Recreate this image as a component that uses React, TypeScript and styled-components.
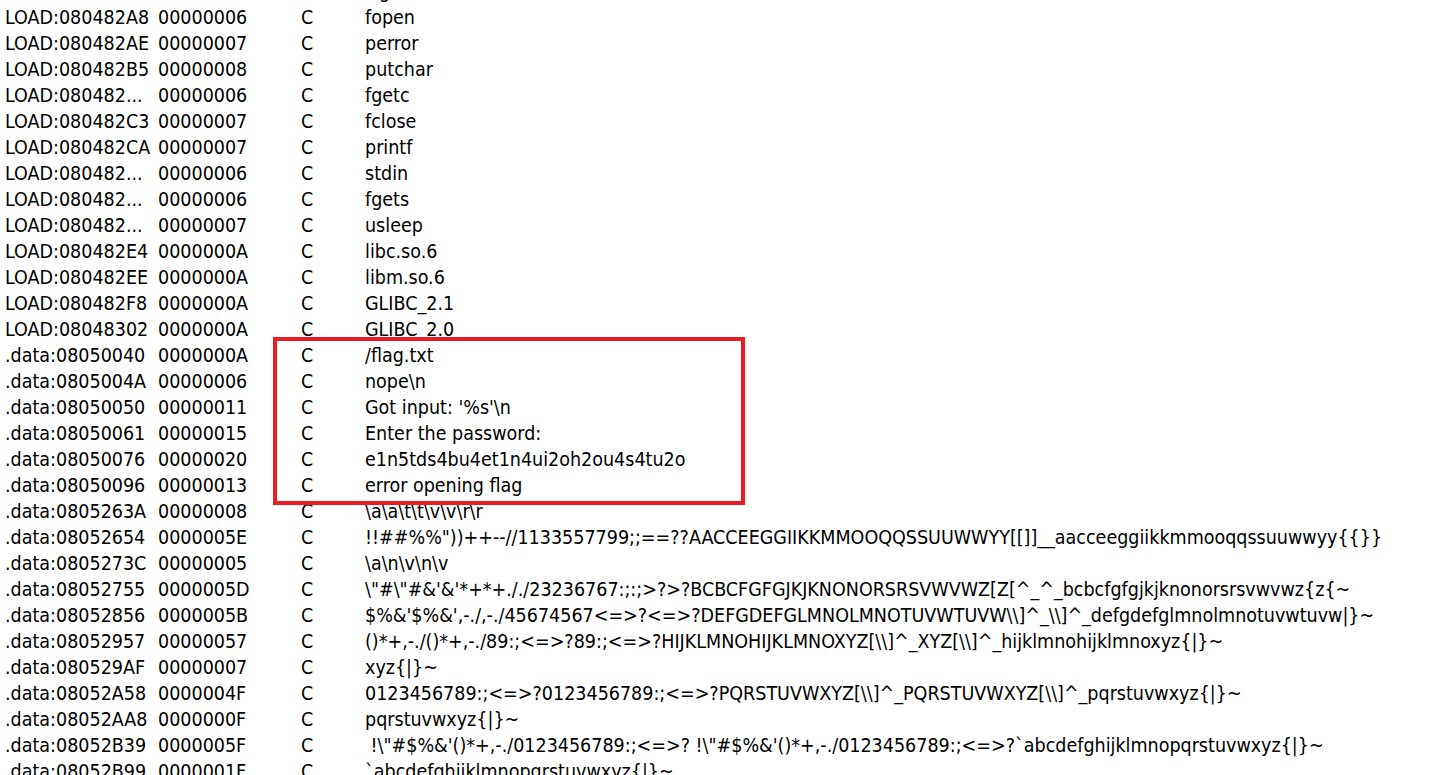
import styled, { createGlobalStyle } from "styled-components";

const GlobalStyle = createGlobalStyle`
  html, body {
    margin: 0;
    padding: 0;
    background: #ffffff;
    overflow: hidden;
  }
`;

const Window = styled.div`
  position: relative;
  width: 1429px;
  height: 775px;
  overflow: hidden;
  background: #ffffff;
`;

const List = styled.div`
  display: flex;
  flex-direction: column;
  margin-top: -21px;
`;

const Row = styled.div`
  display: grid;
  grid-template-columns: 153px 143px 64px 1fr;
  height: 26px;
  line-height: 26px;
  padding-left: 5px;
  font-family: "DejaVu Sans Condensed", "DejaVu Sans", sans-serif;
  font-size: 19.5px;
  color: #000000;
  white-space: pre;
`;

const Cell = styled.span`
  overflow: hidden;
`;

const Highlight = styled.div`
  position: absolute;
  left: 273px;
  top: 337px;
  width: 464px;
  height: 160px;
  border: 4px solid #ed1c24;
  pointer-events: none;
`;

type Str = [string, string, string, string];

const rows: Str[] = [
  ["LOAD:080482A1", "00000007", "C", "signal"],
  ["LOAD:080482A8", "00000006", "C", "fopen"],
  ["LOAD:080482AE", "00000007", "C", "perror"],
  ["LOAD:080482B5", "00000008", "C", "putchar"],
  ["LOAD:080482...", "00000006", "C", "fgetc"],
  ["LOAD:080482C3", "00000007", "C", "fclose"],
  ["LOAD:080482CA", "00000007", "C", "printf"],
  ["LOAD:080482...", "00000006", "C", "stdin"],
  ["LOAD:080482...", "00000006", "C", "fgets"],
  ["LOAD:080482...", "00000007", "C", "usleep"],
  ["LOAD:080482E4", "0000000A", "C", "libc.so.6"],
  ["LOAD:080482EE", "0000000A", "C", "libm.so.6"],
  ["LOAD:080482F8", "0000000A", "C", "GLIBC_2.1"],
  ["LOAD:08048302", "0000000A", "C", "GLIBC_2.0"],
  [".data:08050040", "0000000A", "C", "/flag.txt"],
  [".data:0805004A", "00000006", "C", "nope\\n"],
  [".data:08050050", "00000011", "C", "Got input: '%s'\\n"],
  [".data:08050061", "00000015", "C", "Enter the password:"],
  [".data:08050076", "00000020", "C", "e1n5tds4bu4et1n4ui2oh2ou4s4tu2o"],
  [".data:08050096", "00000013", "C", "error opening flag"],
  [".data:0805263A", "00000008", "C", "\\a\\a\\t\\t\\v\\v\\r\\r"],
  [".data:08052654", "0000005E", "C", "!!##%%\"))++--//1133557799;;==??AACCEEGGIIKKMMOOQQSSUUWWYY[[]]__aacceeggiikkmmooqqssuuwwyy{{}}"],
  [".data:0805273C", "00000005", "C", "\\a\\n\\v\\n\\v"],
  [".data:08052755", "0000005D", "C", "\\\"#\\\"#&'&'*+*+././23236767:;:;>?>?BCBCFGFGJKJKNONORSRSVWVWZ[Z[^_^_bcbcfgfgjkjknonorsrsvwvwz{z{~"],
  [".data:08052856", "0000005B", "C", "$%&'$%&',-./,-./45674567<=>?<=>?DEFGDEFGLMNOLMNOTUVWTUVW\\\\]^_\\\\]^_defgdefglmnolmnotuvwtuvw|}~"],
  [".data:08052957", "00000057", "C", "()*+,-./()*+,-./89:;<=>?89:;<=>?HIJKLMNOHIJKLMNOXYZ[\\\\]^_XYZ[\\\\]^_hijklmnohijklmnoxyz{|}~"],
  [".data:080529AF", "00000007", "C", "xyz{|}~"],
  [".data:08052A58", "0000004F", "C", "0123456789:;<=>?0123456789:;<=>?PQRSTUVWXYZ[\\\\]^_PQRSTUVWXYZ[\\\\]^_pqrstuvwxyz{|}~"],
  [".data:08052AA8", "0000000F", "C", "pqrstuvwxyz{|}~"],
  [".data:08052B39", "0000005F", "C", " !\\\"#$%&'()*+,-./0123456789:;<=>? !\\\"#$%&'()*+,-./0123456789:;<=>?`abcdefghijklmnopqrstuvwxyz{|}~"],
  [".data:08052B99", "0000001F", "C", "`abcdefghijklmnopqrstuvwxyz{|}~"],
];

export default function App() {
  return (
    <Window>
      <GlobalStyle />
      <List>
        {rows.map((r, i) => (
          <Row key={i}>
            <Cell>{r[0]}</Cell>
            <Cell>{r[1]}</Cell>
            <Cell>{r[2]}</Cell>
            <Cell>{r[3]}</Cell>
          </Row>
        ))}
      </List>
      <Highlight />
    </Window>
  );
}
